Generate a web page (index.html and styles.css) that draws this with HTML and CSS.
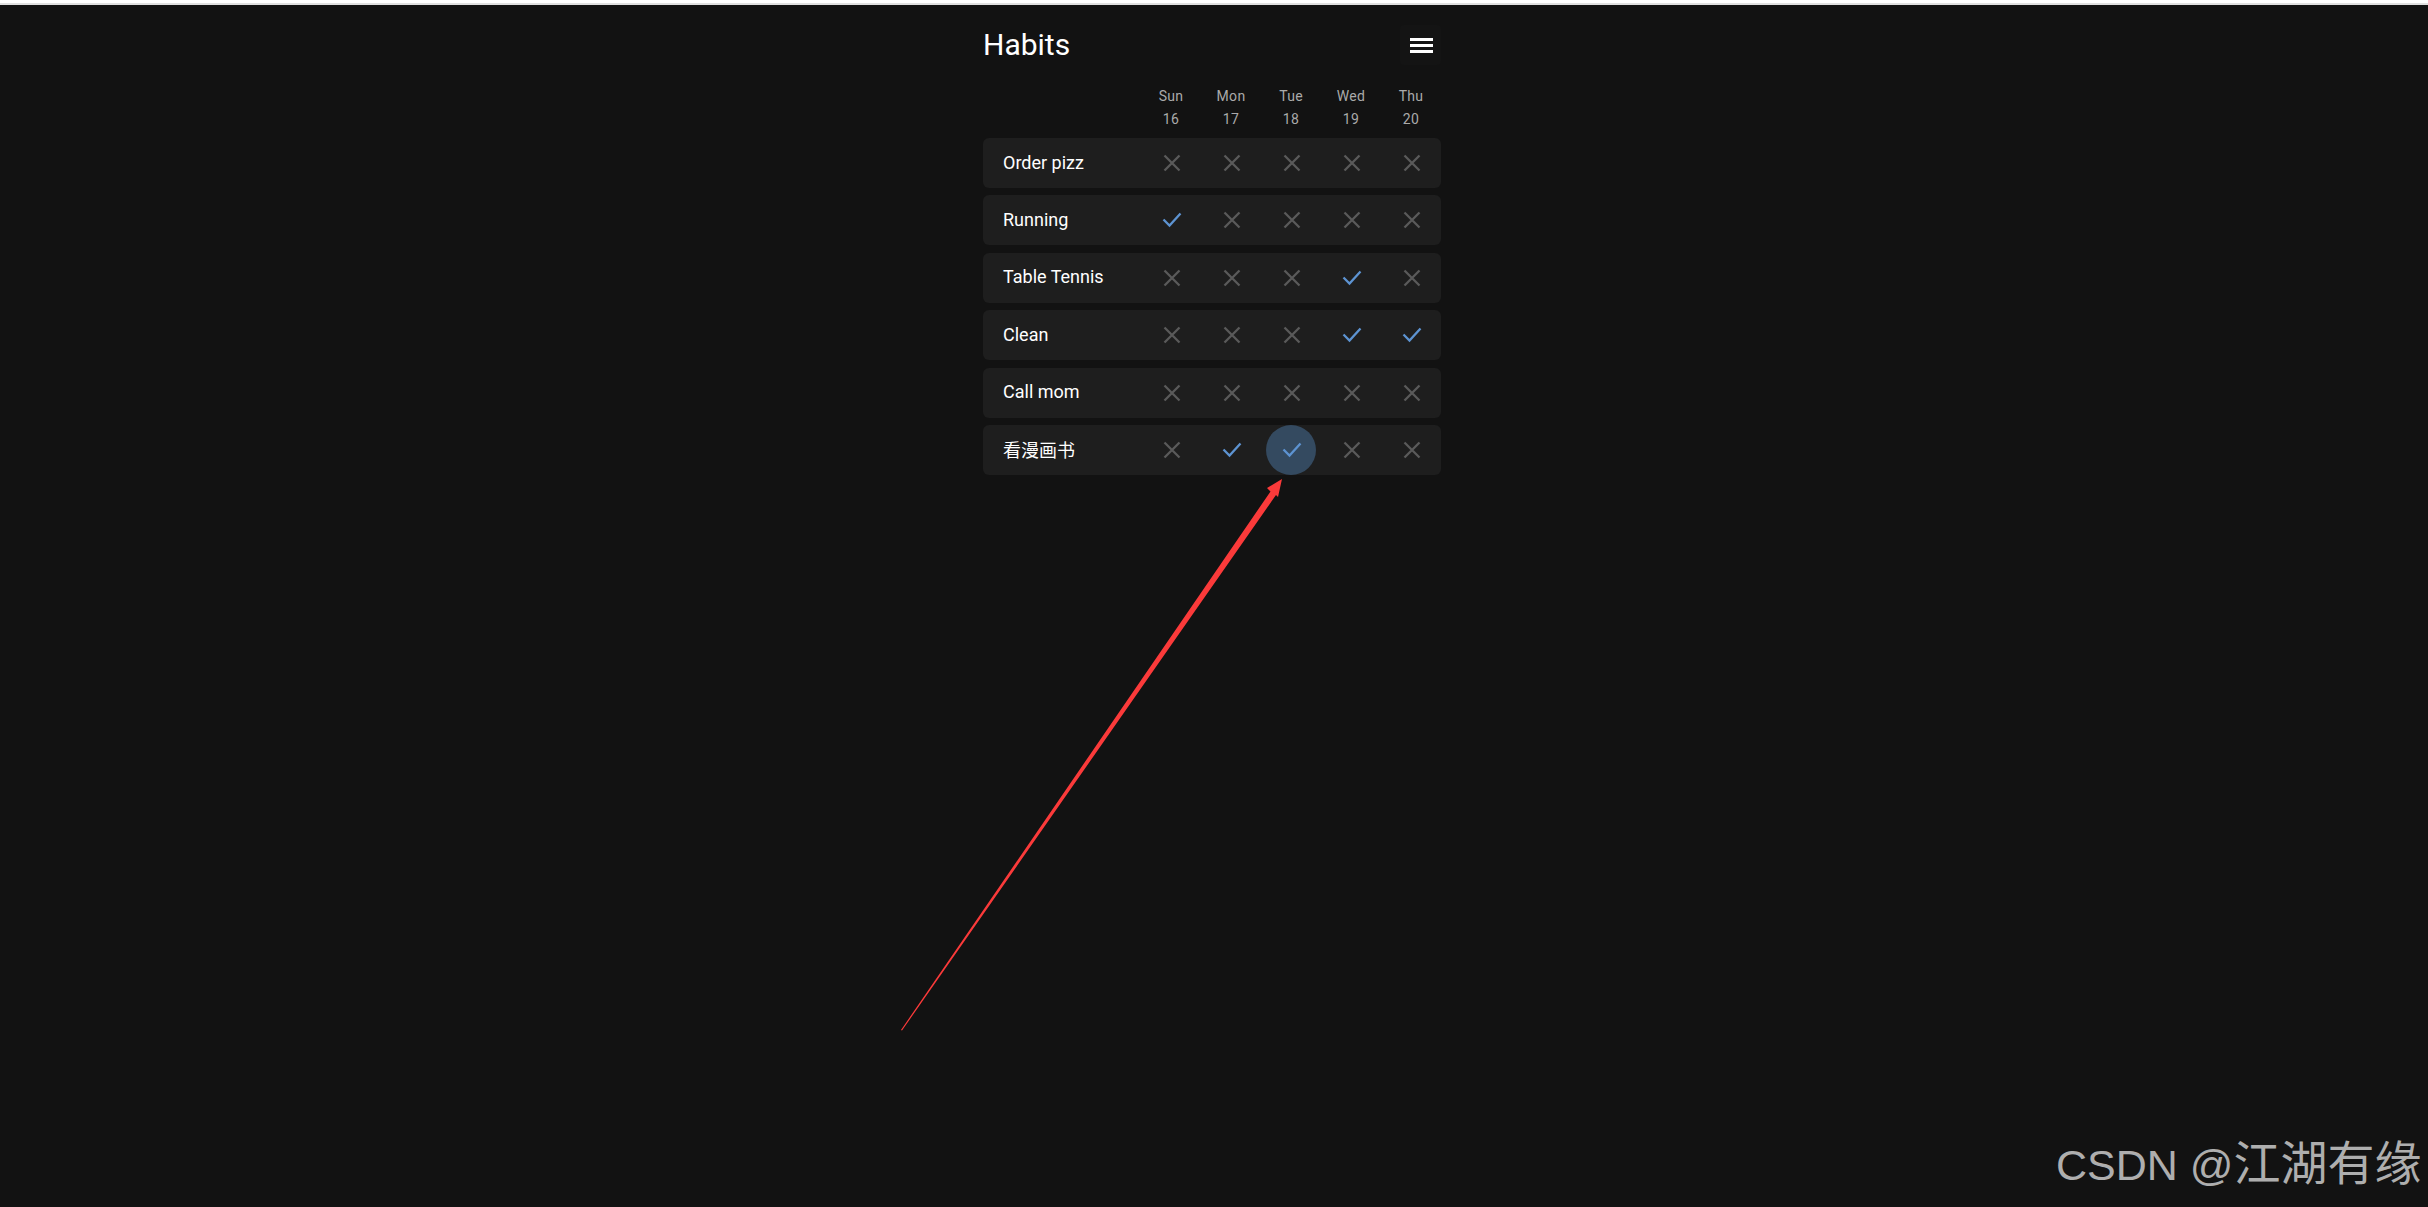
FILE: index.html
```html
<!DOCTYPE html>
<html lang="en">
<head>
    <meta charset="UTF-8">
    <meta name="viewport" content="width=device-width, initial-scale=1.0">
    <title>Habits</title>
    <link rel="stylesheet" href="styles.css">
</head>
<body>
    <svg width="0" height="0" class="defs">
        <symbol id="cross" viewBox="0 0 24 24"><path d="M4.5 4.5L19.5 19.5M19.5 4.5L4.5 19.5" fill="none" stroke="currentColor" stroke-width="2.3"/></symbol>
        <symbol id="check" viewBox="0 0 24 24"><path d="M3.5 11.5L9.5 17.5L20.5 5.5" fill="none" stroke="currentColor" stroke-width="2.3"/></symbol>
    </svg>

    <div class="top-edge"></div>

    <div class="page">
        <div class="container">
            <div class="header">
                <h1>Habits</h1>
                <button class="menu-btn" aria-label="Menu"><span></span><span></span><span></span></button>
            </div>

            <div class="days">
                <div class="day">Sun<br>16</div>
                <div class="day">Mon<br>17</div>
                <div class="day">Tue<br>18</div>
                <div class="day">Wed<br>19</div>
                <div class="day">Thu<br>20</div>
            </div>

            <div class="habits">
                <div class="habit">
                    <div class="name">Order pizz</div>
                    <div class="cell off"><svg><use href="#cross"/></svg></div>
                    <div class="cell off"><svg><use href="#cross"/></svg></div>
                    <div class="cell off"><svg><use href="#cross"/></svg></div>
                    <div class="cell off"><svg><use href="#cross"/></svg></div>
                    <div class="cell off"><svg><use href="#cross"/></svg></div>
                </div>
                <div class="habit">
                    <div class="name">Running</div>
                    <div class="cell on"><svg><use href="#check"/></svg></div>
                    <div class="cell off"><svg><use href="#cross"/></svg></div>
                    <div class="cell off"><svg><use href="#cross"/></svg></div>
                    <div class="cell off"><svg><use href="#cross"/></svg></div>
                    <div class="cell off"><svg><use href="#cross"/></svg></div>
                </div>
                <div class="habit">
                    <div class="name">Table Tennis</div>
                    <div class="cell off"><svg><use href="#cross"/></svg></div>
                    <div class="cell off"><svg><use href="#cross"/></svg></div>
                    <div class="cell off"><svg><use href="#cross"/></svg></div>
                    <div class="cell on"><svg><use href="#check"/></svg></div>
                    <div class="cell off"><svg><use href="#cross"/></svg></div>
                </div>
                <div class="habit">
                    <div class="name">Clean</div>
                    <div class="cell off"><svg><use href="#cross"/></svg></div>
                    <div class="cell off"><svg><use href="#cross"/></svg></div>
                    <div class="cell off"><svg><use href="#cross"/></svg></div>
                    <div class="cell on"><svg><use href="#check"/></svg></div>
                    <div class="cell on"><svg><use href="#check"/></svg></div>
                </div>
                <div class="habit">
                    <div class="name">Call mom</div>
                    <div class="cell off"><svg><use href="#cross"/></svg></div>
                    <div class="cell off"><svg><use href="#cross"/></svg></div>
                    <div class="cell off"><svg><use href="#cross"/></svg></div>
                    <div class="cell off"><svg><use href="#cross"/></svg></div>
                    <div class="cell off"><svg><use href="#cross"/></svg></div>
                </div>
                <div class="habit">
                    <div class="name">看漫画书</div>
                    <div class="cell off"><svg><use href="#cross"/></svg></div>
                    <div class="cell on"><svg><use href="#check"/></svg></div>
                    <div class="cell on ripple"><svg><use href="#check"/></svg></div>
                    <div class="cell off"><svg><use href="#cross"/></svg></div>
                    <div class="cell off"><svg><use href="#cross"/></svg></div>
                </div>
            </div>
        </div>
    </div>

    <!-- annotation drawn over the screenshot -->
    <svg class="arrow" viewBox="0 0 2428 1207">
        <polygon points="1282,479 1278,497 1276,495 902,1030.5 901,1030 1270.5,491.5 1267,488" fill="#fb3a3a"/>
    </svg>

    <div class="watermark">CSDN @<span class="cjk">江湖有缘</span></div>
</body>
</html>
```

FILE: styles.css
```css
* { box-sizing: border-box; }
html, body { height: 100%; }
body {
    margin: 0;
    background: #121212;
    color: #fff;
    font-family: Roboto, "Noto Sans CJK SC", sans-serif;
    overflow: hidden;
}
.defs { position: absolute; }
.top-edge { height: 5px; background: #fff; border-bottom: 2px solid #e0e0e0; }

.page { display: flex; justify-content: center; padding-right: 4px; }
.container { width: 458px; }

.header { display: flex; justify-content: space-between; align-items: center; height: 50px; margin-top: 15px; }
h1 { margin: 0; font-size: 30px; font-weight: 400; line-height: 50px; }
.menu-btn {
    display: flex;
    flex-direction: column;
    justify-content: center;
    gap: 3px;
    width: 41px;
    height: 40px;
    padding: 0 8px 0 10px;
    background: #141414;
    border: none;
    border-radius: 4px;
}
.menu-btn span { display: block; width: 23px; height: 3px; background: #fff; }

.days { display: flex; justify-content: flex-end; margin-top: 10px; height: 58px; padding-top: 5px; }
.day { width: 60px; text-align: center; font-size: 14px; line-height: 23px; color: #aaa; letter-spacing: 0.3px; }

.habits { display: flex; flex-direction: column; gap: 7.4px; }
.habit { display: flex; align-items: center; height: 50px; background: #1e1e1e; border-radius: 6px; }
.name { flex: 1; padding-left: 20px; padding-bottom: 2px; font-size: 18px; }
.cell { display: flex; align-items: center; justify-content: center; width: 60px; height: 50px; padding-left: 1px; }
.cell svg { width: 24px; height: 24px; }
.off { color: #5a5a5a; }
.on { color: #5d93d1; }
.ripple { position: relative; }
.ripple::before {
    content: "";
    position: absolute;
    left: 5px;
    top: 0;
    width: 50px;
    height: 50px;
    border-radius: 50%;
    background: #344a60;
}
.ripple svg { position: relative; }

.arrow { position: absolute; left: 0; top: 0; width: 2428px; height: 1207px; pointer-events: none; }
.watermark {
    position: absolute;
    left: 2056px;
    top: 1136px;
    font-family: "Liberation Sans", "Noto Sans CJK SC", sans-serif;
    font-size: 43px;
    line-height: 56px;
    color: #aeaeae;
    white-space: nowrap;
}
.cjk { font-size: 47px; }
```
